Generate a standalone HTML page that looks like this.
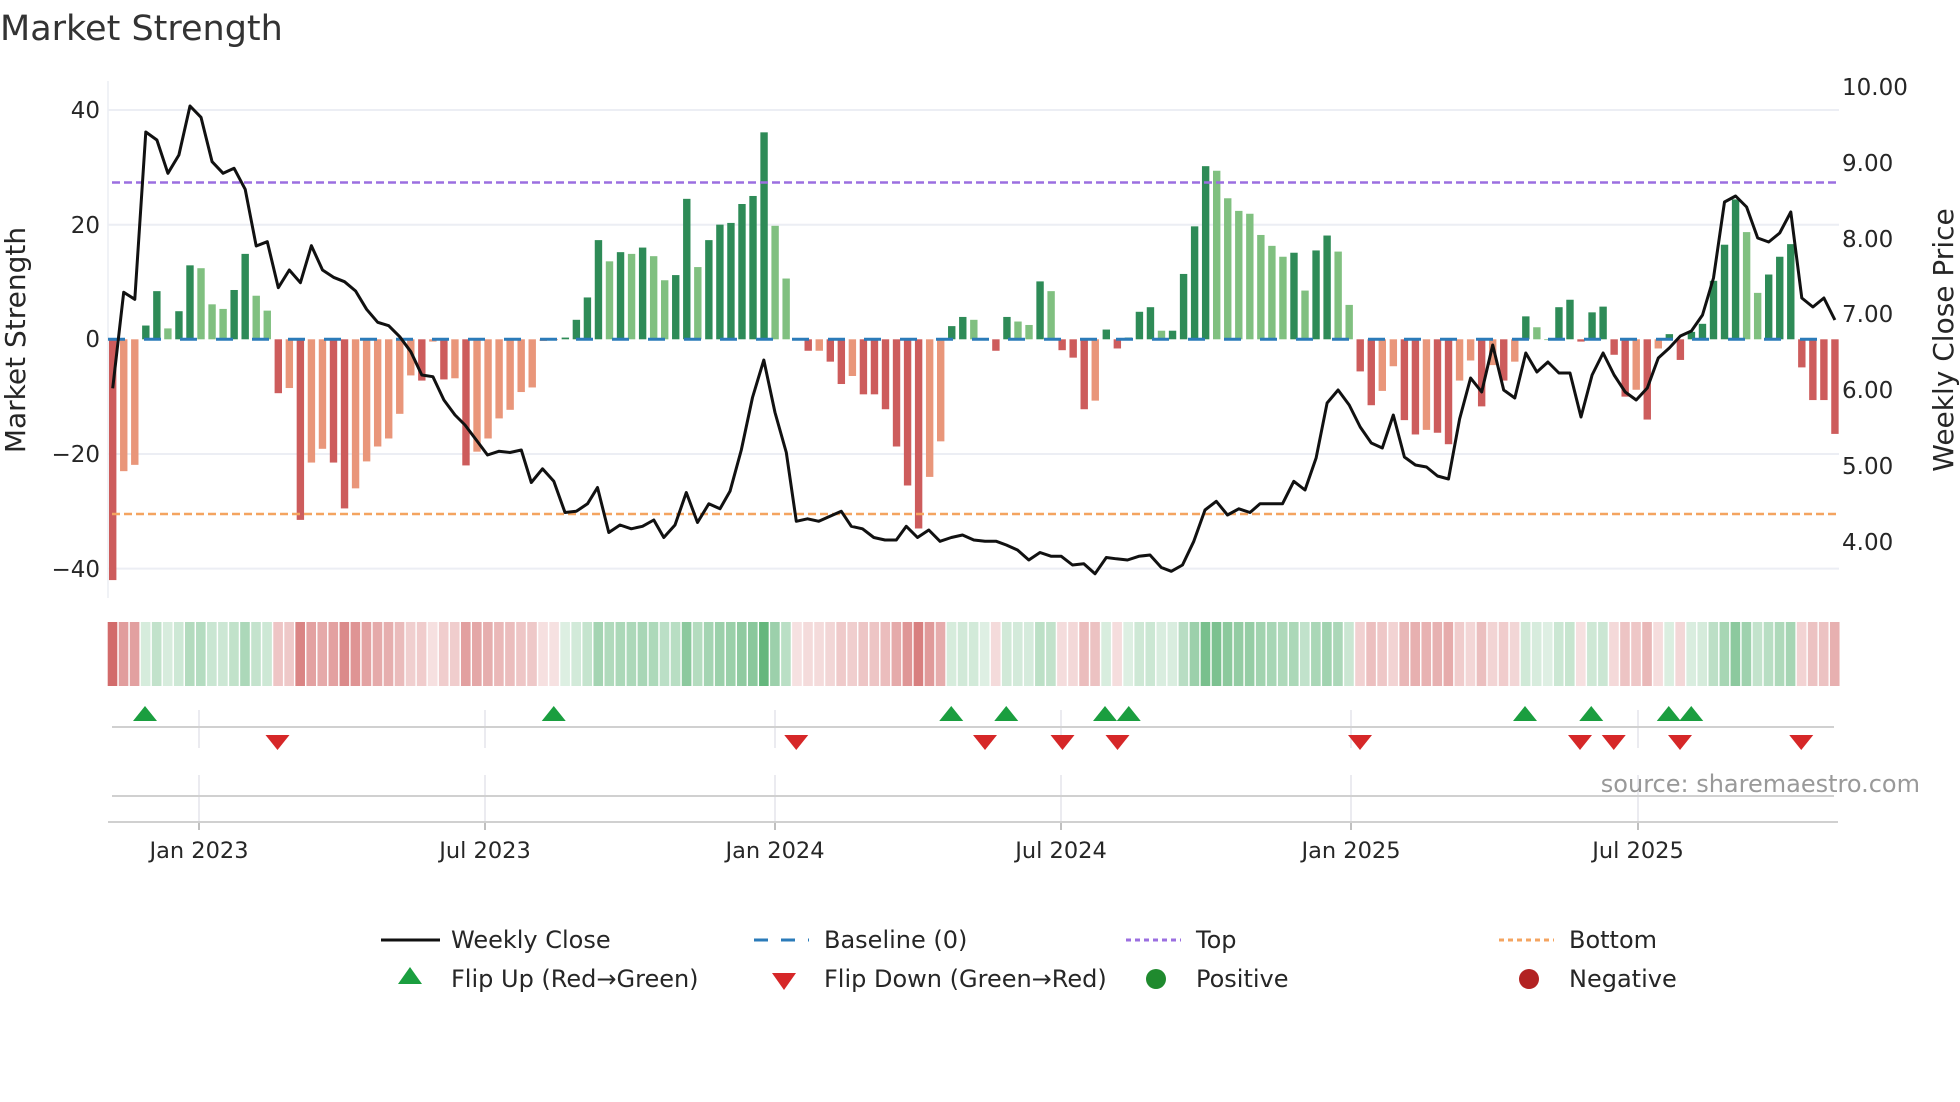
<!DOCTYPE html>
<html><head><meta charset="utf-8">
<style>
html,body{margin:0;padding:0;background:#fff;width:1960px;height:1102px;overflow:hidden}
svg{display:block}
text{font-family:"DejaVu Sans","Liberation Sans",sans-serif;fill:#262626}
</style></head>
<body>
<svg id="c" width="1960" height="1102" viewBox="0 0 1960 1102" xmlns="http://www.w3.org/2000/svg">
<text x="0" y="40" font-size="35" style="fill:#333">Market Strength</text>
<g id="grid"></g>
<g id="bars"></g>
<g id="strip"></g>
<g id="over"></g>
<text x="100" y="118" font-size="23" text-anchor="end">40</text>
<text x="100" y="233" font-size="23" text-anchor="end">20</text>
<text x="100" y="347" font-size="23" text-anchor="end">0</text>
<text x="100" y="462" font-size="23" text-anchor="end">−20</text>
<text x="100" y="577" font-size="23" text-anchor="end">−40</text>
<text transform="translate(25,340) rotate(-90)" font-size="28" text-anchor="middle">Market Strength</text>
<text x="1842" y="95" font-size="23">10.00</text>
<text x="1842" y="171" font-size="23">9.00</text>
<text x="1842" y="247" font-size="23">8.00</text>
<text x="1842" y="322" font-size="23">7.00</text>
<text x="1842" y="398" font-size="23">6.00</text>
<text x="1842" y="474" font-size="23">5.00</text>
<text x="1842" y="550" font-size="23">4.00</text>
<text transform="translate(1953,340) rotate(-90)" font-size="28" text-anchor="middle">Weekly Close Price</text>
<text x="1920" y="792" font-size="24" text-anchor="end" style="fill:#999">source: sharemaestro.com</text>
<g font-size="22.5">
<text x="199" y="858" text-anchor="middle">Jan 2023</text>
<text x="485" y="858" text-anchor="middle">Jul 2023</text>
<text x="775" y="858" text-anchor="middle">Jan 2024</text>
<text x="1061" y="858" text-anchor="middle">Jul 2024</text>
<text x="1351" y="858" text-anchor="middle">Jan 2025</text>
<text x="1638" y="858" text-anchor="middle">Jul 2025</text>
</g>
<g font-size="24">
<line x1="381" y1="940" x2="440" y2="940" stroke="#111" stroke-width="3"/>
<text x="451" y="948">Weekly Close</text>
<line x1="754" y1="940" x2="809" y2="940" stroke="#2b7bb9" stroke-width="3" stroke-dasharray="14,13"/>
<text x="824" y="948">Baseline (0)</text>
<line x1="1126" y1="940" x2="1181" y2="940" stroke="#9b6fe0" stroke-width="3" stroke-dasharray="5,4"/>
<text x="1196" y="948">Top</text>
<line x1="1499" y1="940" x2="1554" y2="940" stroke="#f4a460" stroke-width="3" stroke-dasharray="5,4"/>
<text x="1569" y="948">Bottom</text>
<polygon points="410,967 422,984 398,984" fill="#1a9e3f"/>
<text x="451" y="987">Flip Up (Red→Green)</text>
<polygon points="772,973 796,973 784,990" fill="#d62728"/>
<text x="824" y="987">Flip Down (Green→Red)</text>
<circle cx="1156" cy="979" r="10" fill="#1f8a2e"/>
<text x="1196" y="987">Positive</text>
<circle cx="1529" cy="979" r="10" fill="#b22222"/>
<text x="1569" y="987">Negative</text>
</g>
</svg>
<script>
var NS="http://www.w3.org/2000/svg";
function el(p,t,a){var e=document.createElementNS(NS,t);for(var k in a)e.setAttribute(k,a[k]);p.appendChild(e);return e;}
var vals=[
[-42,'R'],[-23,'r'],[-21.9,'r'],[2.4,'G'],[8.4,'G'],[1.9,'g'],[4.9,'G'],[12.9,'G'],[12.4,'g'],[6.1,'g'],
[5.3,'g'],[8.6,'G'],[14.9,'G'],[7.6,'g'],[5,'g'],[-9.4,'R'],[-8.5,'r'],[-31.5,'R'],[-21.5,'r'],[-19.1,'r'],
[-21.5,'R'],[-29.5,'R'],[-26,'r'],[-21.3,'r'],[-18.7,'r'],[-17.3,'r'],[-13,'r'],[-6.3,'r'],[-7.2,'R'],[-0.4,'r'],
[-7,'R'],[-6.8,'r'],[-22,'R'],[-19.6,'r'],[-17.3,'r'],[-13.8,'r'],[-12.3,'r'],[-9.2,'r'],[-8.4,'r'],[-0.3,'r'],
[-0.1,'r'],[0.3,'G'],[3.4,'G'],[7.3,'G'],[17.3,'G'],[13.6,'g'],[15.2,'G'],[14.9,'g'],[16,'G'],[14.5,'g'],
[10.3,'g'],[11.2,'G'],[24.5,'G'],[12.6,'g'],[17.3,'G'],[20,'G'],[20.3,'G'],[23.6,'G'],[25,'G'],[36.1,'G'],
[19.8,'g'],[10.6,'g'],[0,'r'],[-2,'R'],[-2,'r'],[-3.9,'R'],[-7.8,'R'],[-6.4,'r'],[-9.6,'R'],[-9.6,'R'],
[-12.2,'R'],[-18.7,'R'],[-25.5,'R'],[-33,'R'],[-24,'r'],[-17.8,'r'],[2.3,'G'],[3.9,'G'],[3.4,'g'],[0,'g'],
[-2,'R'],[3.9,'G'],[3.1,'g'],[2.5,'g'],[10.1,'G'],[8.4,'g'],[-1.9,'R'],[-3.2,'R'],[-12.2,'R'],[-10.7,'r'],
[1.7,'G'],[-1.6,'R'],[0.3,'G'],[4.8,'G'],[5.6,'G'],[1.5,'g'],[1.5,'G'],[11.4,'G'],[19.7,'G'],[30.2,'G'],
[29.4,'g'],[24.6,'g'],[22.4,'g'],[21.9,'g'],[18.2,'g'],[16.3,'g'],[14.4,'g'],[15.1,'G'],[8.5,'g'],[15.5,'G'],
[18.1,'G'],[15.3,'g'],[6,'g'],[-5.6,'R'],[-11.5,'R'],[-9,'r'],[-4.7,'r'],[-14.1,'R'],[-16.6,'R'],[-15.8,'r'],
[-16.3,'R'],[-18.3,'R'],[-7.2,'r'],[-3.7,'r'],[-11.7,'R'],[-4.5,'r'],[-7.2,'R'],[-3.9,'r'],[4,'G'],[2.1,'g'],
[0,'g'],[5.6,'G'],[6.9,'G'],[-0.4,'R'],[4.7,'G'],[5.7,'G'],[-2.7,'R'],[-10,'R'],[-8.8,'r'],[-14,'R'],
[-1.6,'r'],[0.9,'G'],[-3.6,'R'],[1.3,'G'],[2.7,'G'],[10.2,'G'],[16.5,'G'],[24.4,'G'],[18.7,'g'],[8.1,'g'],
[11.3,'G'],[14.4,'G'],[16.6,'G'],[-4.9,'R'],[-10.6,'R'],[-10.6,'R'],[-16.5,'R']];
var col={G:'#2e8b57',g:'#80c080',R:'#cd5c5c',r:'#e9967a'};
var Z=339.3,U=5.733,X0=112.7,DX=11.04,BW=7.4;
var grid=document.getElementById('grid'),bars=document.getElementById('bars'),strip=document.getElementById('strip'),over=document.getElementById('over');
[110,224.7,454,568.6].forEach(function(y){el(grid,'line',{x1:108,x2:1839,y1:y,y2:y,stroke:'#eceef4','stroke-width':2});});
el(grid,'line',{x1:108,x2:108,y1:81,y2:598,stroke:'#eceef4','stroke-width':1.5});
vals.forEach(function(v,i){
 var x=X0+DX*i,h=Math.abs(v[0])*U;
 el(bars,'rect',{x:x-BW/2,y:v[0]>=0?Z-h:Z,width:BW,height:Math.max(h,0.8),fill:col[v[1]]});
 var t=Math.min(Math.abs(v[0])/40,1),a=0.18+0.72*t;
 var b=(v[1].toLowerCase()==='g')?[70,168,98]:[205,90,90];
 var c='rgb('+[0,1,2].map(function(k){return Math.round(255+(b[k]-255)*a)}).join(',')+')';
 el(strip,'rect',{x:x-5.0,y:622,width:9.6,height:64,fill:c});
});
el(over,'line',{x1:108,x2:1836,y1:Z,y2:Z,stroke:'#2b7bb9','stroke-width':3,'stroke-dasharray':'17,19'});
el(over,'line',{x1:112,x2:1836,y1:182.5,y2:182.5,stroke:'#9b6fe0','stroke-width':2.5,'stroke-dasharray':'8,4'});
el(over,'line',{x1:112,x2:1836,y1:514,y2:514,stroke:'#f4a460','stroke-width':2.5,'stroke-dasharray':'8,4'});
var a1=[388.3,292.3,299.3,132,140,173.3,155,106,117.3,161.7,173.3,168.3,189.3,246,241.7,287.7,270,282.7,245.7,270,277.3,281.7,291,309.3,322.3,325.7,336.7,351.7,375,376.7,400];
var pts=[];a1.forEach(function(y,i){pts.push([X0+DX*i,y]);});
var d=[364,332,372,340,381,352,390,364,399,361,408,362,417,360,425,386,434,375,443,385,452,410,461,409,470,403,478,390,487,426,496,420,505,423,514,421,523,416,531,430,540,420,549,394,558,418,567,403,576,407,584,393,593,360,602,318,611,288,620,330,629,362,637,417,646,415,655,417,664,413,673,409,681,421,690,423,699,430,708,432,717,432,725,421,734,430,743,424,752,433,761,430,770,428,779,432,788,433,797,433,805,436,814,440,823,448,832,442,841,445,849,445,858,452,867,451,876,459,885,446,893,447,902,448,911,445,920,444,929,454,937,457,946,452,955,433,964,408,973,401,982,412,991,407,1000,410,1008,403,1017,403,1026,403,1035,385,1044,392];
for(var k=0;k<d.length;k+=2)pts.push([d[k]*1.25,d[k+1]*1.25]);
var a2={109:458,110:403,111:390,112:405,113:427,114:443,115:448,116:415,117:457,118:465,119:467,120:476,121:479,122:419,123:378,124:392,125:345,126:390,127:398,128:353,129:372,130:362,131:373,132:373,133:417,134:375,135:353,136:375,137:392,138:400,139:388,140:358,141:348,142:336,143:331,144:315,145:278,146:202,147:196,148:207,149:238,150:242,151:233,152:212,153:298,154:307,155:298,156:320};
for(var i=109;i<=156;i++)pts.push([X0+DX*i,a2[i]]);
el(over,'polyline',{points:pts.map(function(p){return p[0].toFixed(1)+','+p[1].toFixed(1)}).join(' '),fill:'none',stroke:'#111','stroke-width':3,'stroke-linejoin':'round'});
var ticks=[199,485,775,1061,1351,1638];
ticks.forEach(function(x){
 el(over,'line',{x1:x,x2:x,y1:710,y2:748,stroke:'#e4e4ea','stroke-width':1.5});
 el(over,'line',{x1:x,x2:x,y1:775,y2:822,stroke:'#e4e4ea','stroke-width':1.5});
 el(over,'line',{x1:x,x2:x,y1:822,y2:830,stroke:'#aaa','stroke-width':1.5});
});
el(over,'line',{x1:112,x2:1834,y1:727,y2:727,stroke:'#d0d0d0','stroke-width':2});
el(over,'line',{x1:112,x2:1834,y1:796,y2:796,stroke:'#d0d0d0','stroke-width':2});
el(over,'line',{x1:108,x2:1838,y1:822,y2:822,stroke:'#d0d0d0','stroke-width':2});
[116,443,761,805,884,903,1220,1273,1335,1353].forEach(function(x){x*=1.25;
 el(over,'polygon',{points:(x)+',706 '+(x+12)+',721 '+(x-12)+',721',fill:'#1a9e3f'});});
[222,637,788,850,894,1088,1264,1291,1344,1441].forEach(function(x){x*=1.25;
 el(over,'polygon',{points:(x-12)+',735 '+(x+12)+',735 '+x+',750',fill:'#d62728'});});
</script>
</body></html>
